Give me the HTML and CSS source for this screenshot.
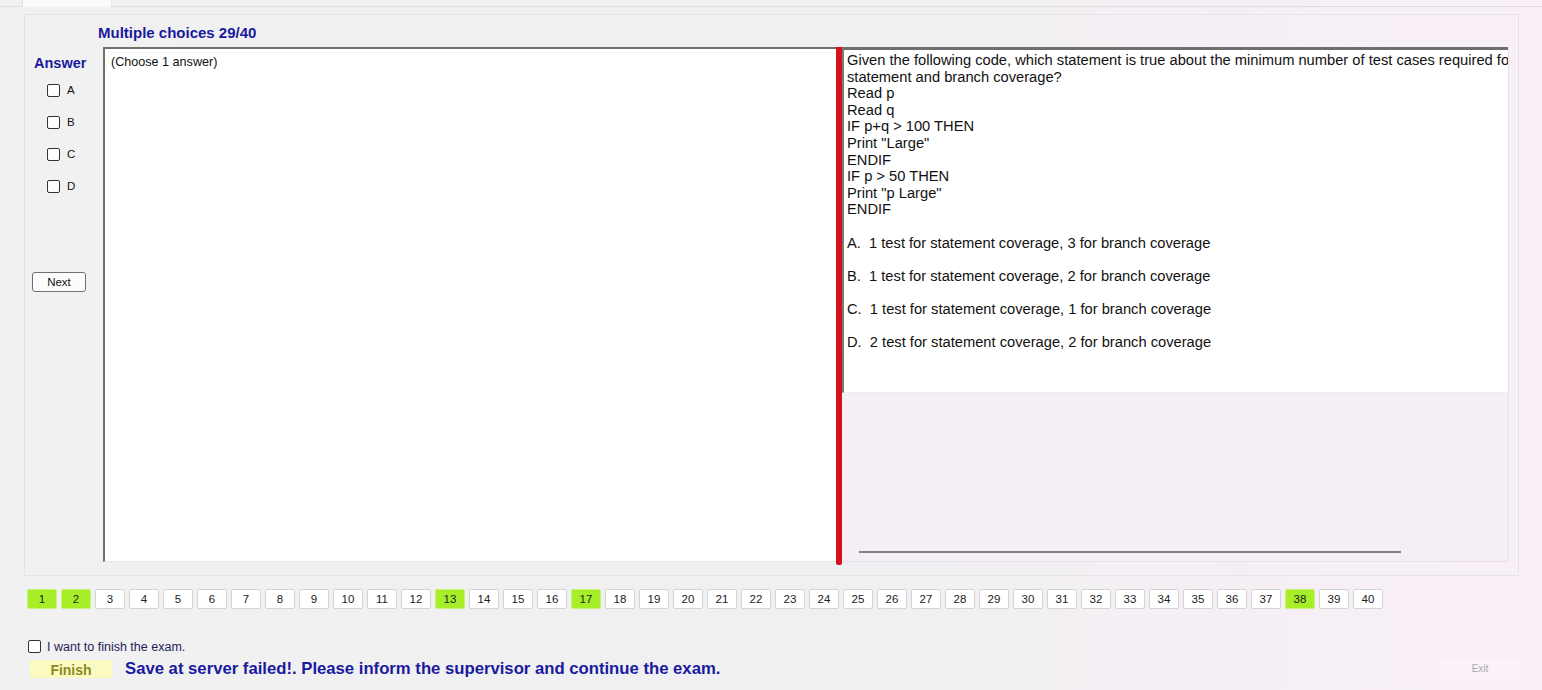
FILE: index.html
```html
<!DOCTYPE html>
<html>
<head>
<meta charset="utf-8">
<link rel="stylesheet" href="styles.css">
</head>
<body>
<div class="tabs"><div class="tab"></div></div>
<div class="main">
  <div class="title">Multiple choices 29/40</div>
  <div class="content">
    <div class="answer-col">
      <div class="answer-label">Answer</div>
      <div class="opt"><span class="cb"></span><span class="opt-text">A</span></div>
      <div class="opt"><span class="cb"></span><span class="opt-text">B</span></div>
      <div class="opt"><span class="cb"></span><span class="opt-text">C</span></div>
      <div class="opt"><span class="cb"></span><span class="opt-text">D</span></div>
      <div class="next">Next</div>
    </div>
    <div class="answer-box">(Choose 1 answer)</div>
    <div class="splitter"></div>
    <div class="question">
      <div class="q-text">Given the following code, which statement is true about the minimum number of test cases required for
statement and branch coverage?
Read p
Read q
IF p+q &gt; 100 THEN
Print "Large"
ENDIF
IF p &gt; 50 THEN
Print "p Large"
ENDIF

A.  1 test for statement coverage, 3 for branch coverage

B.  1 test for statement coverage, 2 for branch coverage

C.  1 test for statement coverage, 1 for branch coverage

D.  2 test for statement coverage, 2 for branch coverage
</div>
      <div class="q-lower"><div class="hbar"></div></div>
    </div>
  </div>
</div>
<div class="nums">
  <span class="num done">1</span><span class="num done">2</span><span class="num">3</span><span class="num">4</span><span class="num">5</span><span class="num">6</span><span class="num">7</span><span class="num">8</span><span class="num">9</span><span class="num">10</span>
  <span class="num">11</span><span class="num">12</span><span class="num done">13</span><span class="num">14</span><span class="num">15</span><span class="num">16</span><span class="num done">17</span><span class="num">18</span><span class="num">19</span><span class="num">20</span>
  <span class="num">21</span><span class="num">22</span><span class="num">23</span><span class="num">24</span><span class="num">25</span><span class="num">26</span><span class="num">27</span><span class="num">28</span><span class="num">29</span><span class="num">30</span>
  <span class="num">31</span><span class="num">32</span><span class="num">33</span><span class="num">34</span><span class="num">35</span><span class="num">36</span><span class="num">37</span><span class="num done">38</span><span class="num">39</span><span class="num">40</span>
</div>
<div class="finish-check"><span class="cb"></span><span class="finish-text">I want to finish the exam.</span></div>
<div class="finish-row">
  <div class="finish-btn">Finish</div>
  <div class="msg">Save at server failed!. Please inform the supervisor and continue the exam.</div>
  <div class="exit">Exit</div>
</div>
</body>
</html>
```
FILE: styles.css
```css
html, body {
  margin: 0;
  padding: 0;
}
body {
  width: 1542px;
  height: 690px;
  overflow: hidden;
  font-family: "Liberation Sans", Arial, sans-serif;
  background: linear-gradient(to right, #f1f1f1 0%, #f0f0f2 55%, #f6eff5 85%, #f9f0f7 100%);
  color: #000;
}
.tabs {
  height: 6px;
  border-bottom: 1px solid #dedede;
  position: relative;
}
.tab {
  margin-left: 22px;
  width: 88px;
  height: 7px;
  background: #fafafa;
  border-left: 1px solid #e2e2e2;
  border-right: 1px solid #e2e2e2;
}
.main {
  margin-top: 7px;
  margin-left: 24px;
  width: 1495px;
  height: 562px;
  border: 1px solid #e4e4e6;
  box-sizing: border-box;
  display: flex;
  flex-direction: column;
}
.title {
  height: 32px;
  padding-left: 73px;
  padding-top: 9px;
  box-sizing: border-box;
  font-size: 15px;
  font-weight: bold;
  color: #1a1a9e;
}
.content {
  display: flex;
  height: 515px;
}
.answer-col {
  width: 78px;
  display: flex;
  flex-direction: column;
}
.answer-label {
  padding-left: 9px;
  padding-top: 8px;
  height: 17px;
  font-size: 14.5px;
  font-weight: bold;
  color: #1a1a9e;
}
.opt {
  display: flex;
  align-items: center;
  height: 32px;
  padding-left: 22px;
}
.answer-label + .opt {
  margin-top: 2px;
}
.cb {
  display: inline-block;
  width: 11px;
  height: 11px;
  border: 1px solid #333;
  border-radius: 2px;
  background: #fff;
}
.opt-text {
  font-size: 11.5px;
  margin-left: 7px;
  color: #111;
}
.next {
  margin-top: 70px;
  margin-left: 7px;
  width: 54px;
  height: 20px;
  box-sizing: border-box;
  border: 1px solid #707070;
  border-radius: 3px;
  background: #fcfcfc;
  font-size: 11.5px;
  text-align: center;
  line-height: 18px;
  color: #111;
}
.answer-box {
  width: 733px;
  background: #fff;
  border-left: 2px solid #707070;
  border-top: 2px solid #707070;
  border-bottom: 1px solid #e6e6e6;
  box-sizing: border-box;
  padding: 6px 0 0 6px;
  font-size: 12.6px;
  color: #111;
}
.splitter {
  width: 6px;
  height: 518px;
  background: #d3121d;
  border-radius: 0 0 2px 2px;
}
.question {
  width: 666px;
  display: flex;
  flex-direction: column;
  border-right: 1px solid #e6e6ea;
}
.q-text {
  height: 346px;
  box-sizing: border-box;
  background: #fff;
  border-top: 3px solid #6e6e6e;
  border-left: 2px solid #7a7a7a;
  border-bottom: 1px solid #ececf0;
  padding: 2px 0 0 3px;
  font-size: 14.7px;
  line-height: 16.6px;
  white-space: pre;
  overflow: hidden;
  color: #111;
}
.q-lower {
  flex: 1;
  background: #f5eef5;
  display: flex;
  flex-direction: column;
  justify-content: flex-end;
  border-bottom: 1px solid #e6e2e8;
}
.hbar {
  margin-left: 17px;
  width: 542px;
  height: 2px;
  background: #858090;
  margin-bottom: 8px;
}
.nums {
  display: flex;
  gap: 4px;
  margin-top: 13px;
  padding-left: 27px;
  height: 20px;
}
.num {
  width: 30px;
  height: 20px;
  box-sizing: border-box;
  border: 1px solid #d4d4d4;
  border-radius: 2px;
  background: #fff;
  font-size: 11.5px;
  text-align: center;
  line-height: 18px;
  color: #222;
}
.num.done {
  background: #a6ee28;
  border-color: #c8f27a;
}
.finish-check {
  display: flex;
  align-items: center;
  margin-top: 31px;
  padding-left: 28px;
  height: 13px;
}
.finish-text {
  margin-left: 6px;
  font-size: 12.5px;
  color: #1c1c5c;
}
.finish-row {
  display: flex;
  align-items: center;
  margin-top: 6px;
  height: 20px;
}
.finish-btn {
  margin-left: 30px;
  width: 82px;
  height: 18px;
  background: #fbfac0;
  color: #8a8a22;
  font-weight: bold;
  font-size: 14px;
  text-align: center;
  line-height: 20px;
}
.msg {
  margin-left: 13px;
  font-size: 16.7px;
  font-weight: bold;
  color: #1a1a9e;
}
.exit {
  margin-left: auto;
  margin-right: 22px;
  width: 80px;
  height: 20px;
  background: #fbf1f9;
  color: #a8a8a8;
  font-size: 10px;
  text-align: center;
  line-height: 20px;
}
```
